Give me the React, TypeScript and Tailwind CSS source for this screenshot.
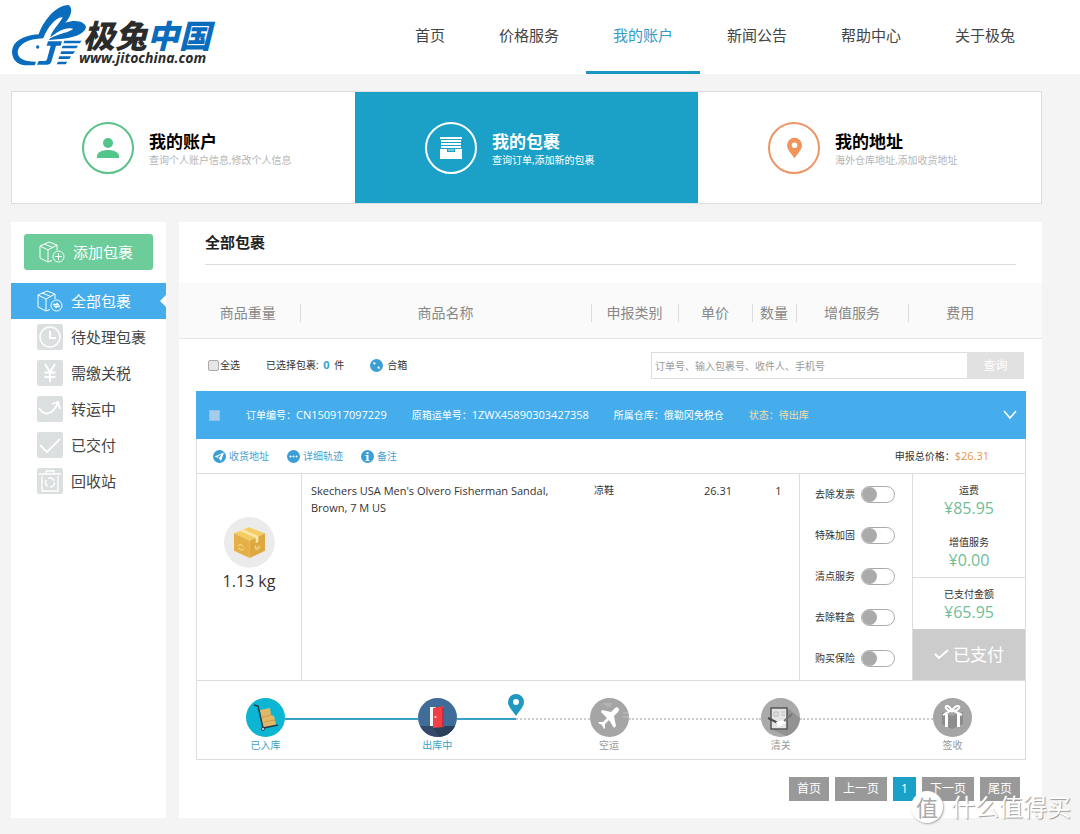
import React, { useState } from 'react';

const navItems = ['首页', '价格服务', '我的账户', '新闻公告', '帮助中心', '关于极兔'];

const services = ['去除发票', '特殊加固', '清点服务', '去除鞋盒', '购买保险'];

const Logo: React.FC = () => (
    <a href="#" className="flex items-start pl-[10px] pt-1">
        <svg className="w-[77px] h-[63px] shrink-0" viewBox="30 12 231 189" aria-hidden="true">
            <path
                fill="#0a6cbd"
                transform="translate(24 6)"
                d="M80 190H50C25 188 12 170 12 148C14 118 45 100 92 97C105 60 140 10 182 9C196 20 190 42 172 62C205 50 234 60 234 77C226 98 195 106 165 110L122 114C132 99 172 96 196 81C188 76 166 79 148 91L127 106C131 86 154 66 164 46C148 42 118 74 106 109C58 111 31 127 29 150C29 168 45 179 84 179Z"
            />
            <path fill="#0a6cbd" d="M144 124H186L182 137H168L154 185Q151 194 140 194H111L116 183H134Q140 183 141 178L152 137H140Z" />
            <path fill="#0a6cbd" d="M193 122H245L239 130H190ZM188 137H234L229 145H185ZM184 154H225L219 162H181ZM178 169H213L208 177H175ZM174 185H202L197 193H170Z" />
            <circle cx="113" cy="141" r="5" fill="#0a6cbd" />
        </svg>
        <span className="-ml-1 mt-[18px] flex flex-col font-bold italic whitespace-nowrap">
            <span className="text-[32px] leading-7 font-black text-[#2b2b2b]">
                极兔<span className="text-[#0a6cbd]">中国</span>
            </span>
            <span className="-ml-1 text-sm leading-4 text-[#2b2b2b]">www.jitochina.com</span>
        </span>
    </a>
);

const PersonIcon = () => (
    <svg className="w-6 h-6" viewBox="0 0 24 24" fill="currentColor">
        <circle cx="12" cy="7" r="5" />
        <path d="M1 22v-2c0-4 6-6 11-6s11 2 11 6v2z" />
    </svg>
);

const DrawerIcon = () => (
    <svg className="w-6 h-6" viewBox="0 0 24 24" fill="currentColor">
        <path d="M1 1h22v2H1zM2 4h20v2H2zM2 7h20v2H2zM2 10h20v2H2z" />
        <path d="M1 13h7v3h8v-3h7v10H1z" />
        <path d="M9 13h6v2H9z" opacity=".4" />
    </svg>
);

const PinIcon = ({ className }: { className: string }) => (
    <svg className={className} viewBox="0 0 16 22" fill="currentColor">
        <path fillRule="evenodd" d="M8 0a8 8 0 0 0-8 8c0 5 5 9 8 14 3-5 8-9 8-14a8 8 0 0 0-8-8zm0 5a3 3 0 1 1 0 6 3 3 0 0 1 0-6z" />
    </svg>
);

const BoxIcon = ({ add }: { add?: boolean }) => (
    <svg className="w-[26px] h-[22px] shrink-0" viewBox="0 0 26 22" fill="none" stroke="currentColor" strokeWidth="1">
        <path d="M13 19.500 9 21 1 17V5l8 4v12M1 5l9-4 8 3-9 5M18 4v5M5 3l9 3.500" />
        <circle cx="19.500" cy="15.500" r="5.500" />
        {add ? (
            <path d="M19.500 12v7M16 15.500h7" />
        ) : (
            <path d="M16 14.500h5l-1.500-1.500M23 16.500h-5l1.500 1.500" strokeWidth="1.300" />
        )}
    </svg>
);

const Tile = ({ children }: { children: React.ReactNode }) => (
    <svg className="w-[26px] h-[26px] shrink-0" viewBox="0 0 26 26" fill="none" stroke="#fff" strokeWidth="2">
        <rect width="26" height="26" rx="2" fill="#dcdfdf" stroke="none" />
        {children}
    </svg>
);

const menu = [
    { label: '待处理包裹', icon: <Tile><circle cx="13" cy="13" r="10" strokeWidth="1.500" /><path d="M13 7v7h6" /></Tile> },
    { label: '需缴关税', icon: <Tile><path d="m8 4 5 8 5-8M13 12v10M7.500 12.500h11M7.500 17h11" strokeWidth="2" /></Tile> },
    { label: '转运中', icon: <Tile><path d="M2 12c5 8 13 8 19-5M15 8l6-2 2 7" strokeWidth="1.800" /></Tile> },
    { label: '已交付', icon: <Tile><path d="m3 13 7 7L23 7" /></Tile> },
    {
        label: '回收站',
        icon: (
            <Tile>
                <path d="M2 6h22M9 6V3h8v3M5 8v15h16V8" strokeWidth="1.300" />
                <circle cx="13" cy="14.500" r="4.500" strokeWidth="1.500" strokeDasharray="7 2.400" />
            </Tile>
        ),
    },
];

const RoundIcon = ({ children }: { children?: React.ReactNode }) => (
    <svg className="w-[13px] h-[13px] shrink-0" viewBox="0 0 26 26" fill="#fff">
        <circle cx="13" cy="13" r="13" fill="#3b9fd6" />
        {children}
    </svg>
);

const actions = [
    { label: '收货地址', icon: <RoundIcon><path fillRule="evenodd" d="m3 13 19-8-6 17-5-6zm6 0 3 3 5-7z" /></RoundIcon> },
    { label: '详细轨迹', icon: <RoundIcon><circle cx="7" cy="13" r="2" /><circle cx="13" cy="13" r="2" /><circle cx="19" cy="13" r="2" /></RoundIcon> },
    { label: '备注', icon: <RoundIcon><path d="M11 4h4v4h-4zM9 10h6v10h2v2H9v-2h2v-8H9z" /></RoundIcon> },
];

const ParcelIcon = () => (
    <svg className="w-[51px] h-[51px]" viewBox="0 0 153 153">
        <circle cx="76" cy="76" r="76" fill="#ebebeb" />
        <path fill="#f3cd63" d="m75 31 48 18-46 22-47-22z" />
        <path fill="#e5b046" d="m30 49 47 22v52L30 101z" />
        <path fill="#dca83f" d="m123 49-46 22v52l46-22z" />
        <path fill="#fbe6a8" d="m47 42 11-5 45 20v18l-8 4V62z" />
        <path fill="none" stroke="#fbe6a8" strokeWidth="3" d="M42 88c5-8 12-5 15 0M44 93c5 7 12 7 16 2M94 86c-1 9 6 8 12 0M92 94c4 6 12 4 16-4" />
    </svg>
);

const stages = [
    {
        label: '已入库',
        done: true,
        icon: (
            <svg viewBox="0 0 39 39">
                <circle cx="19.500" cy="19.500" r="19.500" fill="#0cb5d1" />
                <path fill="#e2b866" d="m14 12 10-2 1 7 3 1 2 9-13 3z" />
                <path stroke="#c99d50" d="m16 19 9-2M18 24l11-2" />
                <path fill="none" stroke="#233b52" strokeWidth="1.500" d="m8 7 4 1 5 22 15-3" />
                <circle cx="17" cy="31" r="1.500" fill="#f4f4f4" stroke="#233b52" />
            </svg>
        ),
    },
    {
        label: '出库中',
        done: true,
        icon: (
            <svg viewBox="0 0 39 39">
                <circle cx="19.500" cy="19.500" r="19.500" fill="#3f6c98" />
                <path fill="#33496a" d="M2 28h35a19.500 19.500 0 0 1-35 0z" />
                <path fill="#294058" d="m15 29 11-1h11a19.500 19.500 0 0 1-16 11z" />
                <path fill="#f7f7f7" d="M12 9h6v19h-6z" />
                <path fill="#f23e45" d="m15 10 11-2v21l-11 1z" />
                <path fill="#c92c3b" d="M26 10v18l-2 1V9z" />
                <circle cx="17.500" cy="19" r="1" fill="#fff" />
            </svg>
        ),
    },
    {
        label: '空运',
        done: false,
        icon: (
            <svg viewBox="0 0 39 39">
                <circle cx="19.500" cy="19.500" r="19.500" fill="#a5a5a5" />
                <path stroke="#c0c0c0" d="M13 6h9M16 8h5M33 15h5M32 19h7" />
                <path fill="#fff" d="M28 10c2 1 1 3-1 5l-3 3 2 10-2 2-5-8-4 4v4l-1 1-2-4-4-2 1-1h4l4-4-6-6 1-2 9 2 3-3c2-2 3-2 4-1z" />
            </svg>
        ),
    },
    {
        label: '清关',
        done: false,
        icon: (
            <svg viewBox="0 0 39 39">
                <circle cx="19.500" cy="19.500" r="19.500" fill="#aaa" />
                <path fill="#929292" d="m10 31 18-20 11 9a19.500 19.500 0 0 1-14 18z" />
                <path fill="#e4e4e4" stroke="#555" strokeWidth="1.500" d="M10 10h16v21H10z" />
                <path fill="none" stroke="#bbb" d="M13 14h4v4h-4zM20 14h4M20 17h4" />
                <path fill="none" stroke="#4c4c4c" strokeWidth="2" d="m7 20 10 5" />
                <path fill="none" stroke="#777" strokeWidth="2" d="m22 24 9-8" />
                <path fill="#fff" d="m15 24 7-2 3 3-8 4z" />
            </svg>
        ),
    },
    {
        label: '签收',
        done: false,
        icon: (
            <svg viewBox="0 0 39 39">
                <circle cx="19.500" cy="19.500" r="19.500" fill="#a5a5a5" />
                <path fill="#8d8d8d" d="m9 14 10 4 11-4v12l-11 5-10-5z" />
                <path fill="#fff" d="M12 16h3v13h-3zM24 16h3v13h-3z" />
                <path fill="none" stroke="#fff" strokeWidth="2" d="m10 17 9-5 10 5M19 13c-6 0-8-5-5-5s4 3 5 5c1-2 3-5 6-5s1 5-6 5" />
            </svg>
        ),
    },
];

const AccountCards: React.FC = () => {
    const cards = [
        { title: '我的账户', text: '查询个人账户信息,修改个人信息', icon: <PersonIcon />, ring: 'border-[#59c189] text-[#53c48a]', active: false },
        { title: '我的包裹', text: '查询订单,添加新的包裹', icon: <DrawerIcon />, ring: 'border-white text-white', active: true },
        { title: '我的地址', text: '海外仓库地址,添加收货地址', icon: <PinIcon className="w-[15px] h-[22px]" />, ring: 'border-[#ec9667] text-[#f0945b]', active: false },
    ];

    return (
        <div className="grid grid-cols-3 bg-white border border-[#dedede]">
            {cards.map((card) => (
                <a
                    key={card.title}
                    href="#"
                    className={`flex items-center gap-[15px] h-[111px] pl-[70px] ${card.active ? 'bg-[#1ba1c8] text-white' : 'text-black'}`}
                >
                    <span className={`flex items-center justify-center w-[52px] h-[52px] rounded-full border-2 ${card.ring}`}>
                        {card.icon}
                    </span>
                    <span className="flex flex-col pt-1 whitespace-nowrap">
                        <span className="text-[17px] leading-5 font-bold">{card.title}</span>
                        <span className={`text-[10px] leading-4 ${card.active ? 'text-white' : 'text-[#b5b5b5]'}`}>{card.text}</span>
                    </span>
                </a>
            ))}
        </div>
    );
};

const Sidebar: React.FC = () => (
    <aside className="w-[155px] shrink-0 bg-white pt-3">
        <div className="px-[13px]">
            <button className="flex items-center gap-2 w-full h-9 pl-[15px] rounded-[3px] bg-[#6dcd9a] text-white text-[15px]">
                <BoxIcon add />
                添加包裹
            </button>
        </div>
        <nav className="mt-[13px] text-[15px] text-[#444]">
            <a href="#" className="relative flex items-center gap-2 h-9 pl-[26px] bg-[#45adec] text-white">
                <BoxIcon />
                全部包裹
                <span className="absolute right-0 top-3 border-y-[6px] border-r-[6px] border-y-transparent border-r-white"></span>
            </a>
            {menu.map((item) => (
                <a key={item.label} href="#" className="flex items-center gap-2 h-9 pl-[26px]">
                    {item.icon}
                    {item.label}
                </a>
            ))}
        </nav>
    </aside>
);

const HeaderTable: React.FC = () => {
    const columns = [
        { label: '商品重量', width: 'w-[104px]' },
        { label: '商品名称', width: '' },
        { label: '申报类别', width: 'w-[87px]' },
        { label: '单价', width: 'w-[74px]' },
        { label: '数量', width: 'w-[44px]' },
        { label: '增值服务', width: 'w-[112px]' },
        { label: '费用', width: 'w-[104px]' },
    ];

    return (
        <div className="bg-[#fafafa] border-b border-[#e6e6e6] pt-[21px] pb-4 pl-[17px] pr-[30px]">
            <table className="w-full table-fixed text-sm leading-[18px] text-[#888]">
                <thead>
                    <tr>
                        {columns.map((col) => (
                            <th key={col.label} className={`p-0 font-normal whitespace-nowrap border-r border-[#ddd] last:border-r-0 ${col.width}`}>
                                {col.label}
                            </th>
                        ))}
                    </tr>
                </thead>
            </table>
        </div>
    );
};

const Switch = ({ label }: { label: string }) => {
    const [on, setOn] = useState(false);

    return (
        <label className="flex items-center gap-[6px] h-[41px] whitespace-nowrap">
            {label}
            <span className="relative flex">
                <input
                    type="checkbox"
                    role="switch"
                    checked={on}
                    onChange={() => setOn(!on)}
                    className="peer appearance-none w-[34px] h-[17px] rounded-full border border-[#aaa] bg-white"
                />
                <span className="pointer-events-none absolute left-px top-px w-[15px] h-[15px] rounded-full bg-[#aaa] peer-checked:left-[18px]"></span>
            </span>
        </label>
    );
};

const Cost = ({ label, value }: { label: string; value: string }) => (
    <div className="flex flex-col items-center">
        <span className="leading-4">{label}</span>
        <span className="text-base leading-5 text-[#72bd96]">{value}</span>
    </div>
);

const Timeline: React.FC = () => (
    <ol className="flex border-t border-[#ddd] h-[79px] pt-[17px] pl-[49px] pr-[53px] text-[10px]">
        {stages.map((stage, i) => (
            <React.Fragment key={stage.label}>
                {i === 2 && (
                    <li className="flex flex-1 pt-5">
                        <span className="relative w-[59px] border-t-2 border-[#3c9fc4] h-0">
                            <PinIcon className="absolute -right-2 -top-[26px] w-4 h-[22px] text-[#1f98c2]" />
                        </span>
                        <span className="flex-1 border-t-2 border-dotted border-[#ccc] h-0"></span>
                    </li>
                )}
                {i === 1 && <li className="flex-1 mt-5 h-0 border-t-2 border-[#3c9fc4]"></li>}
                {i > 2 && <li className="flex-1 mt-5 h-0 border-t-2 border-dotted border-[#ccc]"></li>}
                <li className={`flex flex-col w-[39px] whitespace-nowrap text-center ${stage.done ? 'text-[#3c9fc4]' : 'text-[#999]'}`}>
                    {stage.icon}
                    <span className="leading-4">{stage.label}</span>
                </li>
            </React.Fragment>
        ))}
    </ol>
);

const Order: React.FC = () => (
    <section className="text-[10px] text-[#333]">
        <div className="flex items-center h-12 pl-[13px] pr-[9px] bg-[#45adec] text-white whitespace-nowrap">
            <input type="checkbox" aria-label="选择订单" className="appearance-none w-[11px] h-[11px] bg-[#a3cdeb] border border-[#8fc1e6]" />
            <div className="flex flex-1 items-center gap-[25px] pl-[26px]">
                <span>订单编号：<span className="text-[11px]">CN150917097229</span></span>
                <span>原箱运单号：<span className="text-[11px]">1ZWX45890303427358</span></span>
                <span>所属仓库：俄勒冈免税仓</span>
                <span className="text-[#f5dfa0]">状态：待出库</span>
            </div>
            <button aria-label="收起">
                <svg className="w-[14px] h-[10px]" viewBox="0 0 14 10" fill="none" stroke="currentColor" strokeWidth="1.500">
                    <path d="m1 1 6 7 6-7" />
                </svg>
            </button>
        </div>
        <div className="border border-t-0 border-[#ddd]">
            <div className="flex items-center h-[34px] pl-4 pr-9">
                <div className="flex flex-1 gap-[18px]">
                    {actions.map((action) => (
                        <a key={action.label} href="#" className="flex items-center gap-[3px] text-[#4a9fd0]">
                            {action.icon}
                            {action.label}
                        </a>
                    ))}
                </div>
                <span>
                    申报总价格：<span className="text-[11px] text-[#e8963c]">$26.31</span>
                </span>
            </div>
            <div className="flex border-t border-[#ddd] h-[207px]">
                <div className="flex flex-col items-center w-[105px] shrink-0 pt-[43px] border-r border-[#ddd]">
                    <ParcelIcon />
                    <span className="mt-[3px] text-base leading-5">1.13 kg</span>
                </div>
                <div className="flex-1 border-r border-[#ddd]">
                    <table className="w-full table-fixed text-[11px] leading-[17px]">
                        <tbody>
                            <tr className="align-top">
                                <td className="pl-[9px] pt-2 pr-9">Skechers USA Men's Olvero Fisherman Sandal, Brown, 7 M US</td>
                                <td className="w-[84px] p-0 pt-2 text-[10px]">凉鞋</td>
                                <td className="w-[80px] p-0 pt-2 text-center">26.31</td>
                                <td className="w-[41px] p-0 pt-2 text-center">1</td>
                            </tr>
                        </tbody>
                    </table>
                </div>
                <div className="flex flex-col w-[113px] shrink-0 pl-[15px] border-r border-[#ddd]">
                    {services.map((name) => (
                        <Switch key={name} label={name} />
                    ))}
                </div>
                <div className="flex flex-col w-[112px] shrink-0">
                    <div className="flex flex-col gap-4 h-[103px] pt-2">
                        <Cost label="运费" value="¥85.95" />
                        <Cost label="增值服务" value="¥0.00" />
                    </div>
                    <div className="h-[52px] pt-2 border-t border-[#ddd]">
                        <Cost label="已支付金额" value="¥65.95" />
                    </div>
                    <button className="flex flex-1 items-center justify-center gap-1 bg-[#cdcccc] text-white text-[17px]">
                        <svg className="w-[15px] h-[11px]" viewBox="0 0 15 11" fill="none" stroke="currentColor" strokeWidth="2">
                            <path d="m1 5 4 4 9-8" />
                        </svg>
                        已支付
                    </button>
                </div>
            </div>
            <Timeline />
        </div>
    </section>
);

const Pagination: React.FC = () => (
    <nav className="flex justify-end gap-[6px] mt-[17px] pr-[6px] text-xs text-white">
        {['首页', '上一页', '1', '下一页', '尾页'].map((page) => (
            <a
                key={page}
                href="#"
                className={`flex items-center h-6 px-2 ${page === '1' ? 'bg-[#1ba1c8]' : 'bg-[#999]'}`}
            >
                {page}
            </a>
        ))}
    </nav>
);

const Packages: React.FC = () => (
    <main className="flex-1 min-w-0 bg-white">
        <h1 className="mx-[26px] h-[43px] pt-2 border-b border-[#ddd] text-[15px] leading-6 font-bold text-[#222]">全部包裹</h1>
        <div className="mt-[18px]">
            <HeaderTable />
        </div>
        <div className="pl-[17px] pr-4 pb-[17px]">
            <div className="flex items-center h-[52px] pl-3 text-[10px] text-[#333]">
                <label className="flex items-center gap-px">
                    <input type="checkbox" className="appearance-none w-[11px] h-[11px] rounded-[2px] border border-[#aaa] bg-[#e6e6e6]" />
                    全选
                </label>
                <span className="ml-[26px]">
                    已选择包裹: <b className="px-[2px] text-[11px] text-[#3b9fd6]">0</b> 件
                </span>
                <button className="flex items-center gap-1 ml-[26px]">
                    <RoundIcon>
                        <path d="m6 6 6 2-4 4zM20 20l-6-2 4-4z" />
                    </RoundIcon>
                    合箱
                </button>
                <form className="flex flex-1 justify-end pr-[2px] pt-px" onSubmit={(e) => e.preventDefault()}>
                    <input
                        type="text"
                        aria-label="搜索包裹"
                        placeholder="订单号、输入包裹号、收件人、手机号"
                        className="w-[316px] h-[27px] px-[3px] border border-r-0 border-[#ddd] placeholder:text-[#999]"
                    />
                    <button className="w-[57px] bg-[#e1e1e1] text-xs text-white">查询</button>
                </form>
            </div>
            <Order />
            <Pagination />
        </div>
    </main>
);

const Watermark: React.FC = () => (
    <div className="pointer-events-none absolute right-[9px] top-[791px] flex items-center gap-2 text-white">
        <span className="flex items-center justify-center w-8 h-8 rounded-full bg-white text-[22px] leading-8 text-[#aaa] shadow-[1px_1px_2px_#aaa]">
            值
        </span>
        <span className="text-2xl leading-8 [text-shadow:1px_1px_1px_#999]">什么值得买</span>
    </div>
);

const App: React.FC = () => {
    return (
        <div className="relative min-h-screen overflow-hidden bg-[#f4f4f4] font-['Open_Sans','Noto_Sans_CJK_SC',sans-serif]" lang="zh-CN">
            <header className="flex justify-between h-[74px] pr-[38px] bg-white">
                <Logo />
                <nav className="flex text-[15px] text-[#444]">
                    {navItems.map((item) => (
                        <a
                            key={item}
                            href="#"
                            className={`px-[27px] pt-[23px] leading-6 whitespace-nowrap border-b-[3px] ${item === '我的账户' ? 'border-[#1b95c3] text-[#3399c8]' : 'border-transparent'}`}
                        >
                            {item}
                        </a>
                    ))}
                </nav>
            </header>
            <div className="pt-[17px] pb-4 pl-[11px] pr-[38px]">
                <AccountCards />
                <div className="flex gap-[13px] mt-[18px]">
                    <Sidebar />
                    <Packages />
                </div>
            </div>
            <Watermark />
        </div>
    );
};

export default App;
